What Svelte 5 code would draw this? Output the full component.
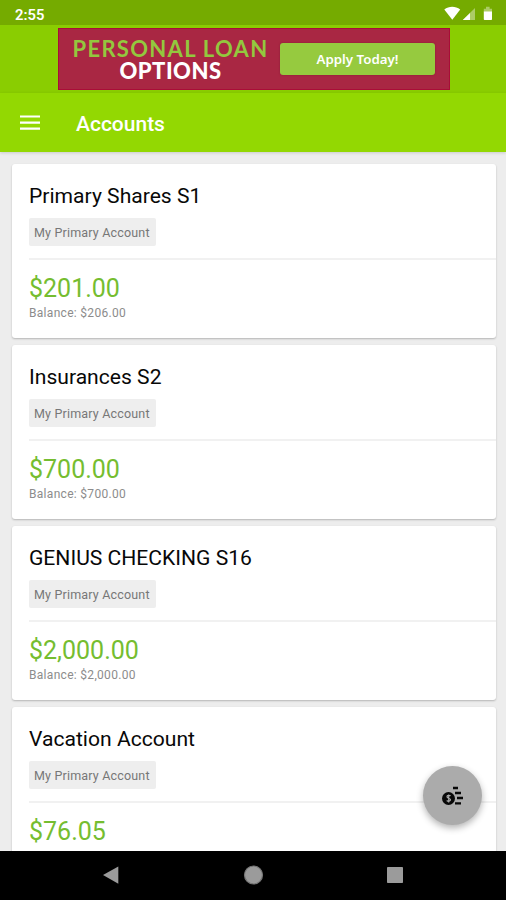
<script lang="ts">
	type Account = {
		name: string;
		tag: string;
		available: string;
		balance?: string;
	};

	const accounts: Account[] = [
		{ name: 'Primary Shares S1', tag: 'My Primary Account', available: '$201.00', balance: '$206.00' },
		{ name: 'Insurances S2', tag: 'My Primary Account', available: '$700.00', balance: '$700.00' },
		{ name: 'GENIUS CHECKING S16', tag: 'My Primary Account', available: '$2,000.00', balance: '$2,000.00' },
		{ name: 'Vacation Account', tag: 'My Primary Account', available: '$76.05' }
	];
</script>

<div class="screen">
	<div class="status-bar">
		<span class="time">2:55</span>
		<svg class="status-icons" width="50" height="16" viewBox="0 0 50 16" aria-hidden="true">
			<path d="M0.3 3.4C4.8-0.2 11.6-0.2 16.2 3.4L8.3 13.8Z" fill="#fff" />
			<path d="M18.8 14L31 2V14Z" fill="#fff" opacity="0.4" />
			<path d="M18.8 14L26 7V14Z" fill="#fff" />
			<path d="M42 0.8h3.6v2H48V6h-8.2V2.8H42Z" fill="#fff" opacity="0.4" />
			<path d="M39.8 5.5H48V13.2q0 0.8-0.8 0.8h-6.6q-0.8 0-0.8-0.8Z" fill="#fff" />
		</svg>
	</div>

	<div class="promo">
		<div class="banner">
			<div class="headline">
				<span class="line-one">PERSONAL LOAN</span>
				<span class="line-two">OPTIONS</span>
			</div>
			<button class="apply">Apply Today!</button>
		</div>
	</div>

	<header class="toolbar">
		<button class="menu" aria-label="Menu">
			<svg width="20" height="15" viewBox="0 0 20 15">
				<path d="M0 1.5h20M0 7.6h20M0 13.6h20" stroke="#fff" stroke-width="2.2" />
			</svg>
		</button>
		<h1>Accounts</h1>
	</header>

	<main class="accounts">
		{#each accounts as account}
			<section class="card">
				<div class="top">
					<h2>{account.name}</h2>
					<span class="tag">{account.tag}</span>
				</div>
				<div class="amounts">
					<p class="available">{account.available}</p>
					{#if account.balance}
						<p class="balance">Balance: {account.balance}</p>
					{/if}
				</div>
			</section>
		{/each}
	</main>

	<button class="fab" aria-label="Quick pay">
		<svg width="22" height="20" viewBox="0 0 22 20">
			<circle cx="6.5" cy="12.5" r="6.5" fill="#080808" />
			<path
				d="M8.6 9.9C7.5 9 5 9.1 5 10.7c0 1.8 3.5 1.3 3.5 3.1 0 1.6-2.5 1.8-3.8 0.7M6.7 8.4v8.2"
				fill="none"
				stroke="#aaa"
				stroke-width="1.2"
			/>
			<path d="M11 2h5M13 7h6M15 12h6M13 17.3h6" stroke="#080808" stroke-width="2.3" />
		</svg>
	</button>

	<nav class="nav-bar">
		<svg width="506" height="49" viewBox="0 0 506 49">
			<path d="M103 24L118.3 15.5V32.8Z" fill="#9b9b9b" />
			<circle cx="253.5" cy="24" r="9" fill="#9b9b9b" stroke="#777" stroke-width="1.2" />
			<rect x="387" y="16" width="16" height="16" rx="0.8" fill="#9b9b9b" />
		</svg>
	</nav>
</div>

<style>
	:global(body) {
		margin: 0;
	}

	.screen {
		position: relative;
		display: flex;
		flex-direction: column;
		width: 506px;
		height: 900px;
		overflow: hidden;
		background: #ededed;
		font-family: Roboto, sans-serif;
	}

	button {
		border: 0;
		padding: 0;
		font-family: inherit;
	}

	h1,
	h2,
	p {
		margin: 0;
	}

	.status-bar {
		flex: none;
		display: flex;
		align-items: center;
		justify-content: space-between;
		box-sizing: border-box;
		height: 25px;
		padding: 2px 12px 0 15px;
		background: #75ab00;
	}

	.time {
		color: #fff;
		font-size: 14.8px;
		font-weight: 600;
		line-height: 20px;
		padding-top: 2px;
	}

	.status-icons {
		margin-top: 1px;
	}

	.promo {
		flex: none;
		display: flex;
		justify-content: center;
		box-sizing: border-box;
		height: 68px;
		padding: 3px 0 0 2px;
		background: #8acd01;
	}

	.banner {
		display: flex;
		box-sizing: border-box;
		width: 392px;
		height: 62px;
		border: 1px solid #a90d37;
		background: #a92743;
	}

	.headline {
		display: flex;
		flex-direction: column;
		align-items: center;
		width: 221px;
		padding-left: 1px;
		padding-top: 9px;
		font-family: Lato, sans-serif;
		font-size: 22px;
		font-weight: 700;
		line-height: 22px;
		white-space: nowrap;
	}

	.line-one {
		color: #93c83e;
		letter-spacing: 1.3px;
	}

	.line-two {
		color: #fff;
		font-weight: 900;
		letter-spacing: 0.5px;
	}

	.apply {
		width: 155px;
		height: 32px;
		margin-top: 14px;
		margin-left: -1px;
		border-radius: 3px;
		background: #96ca3f;
		box-shadow: 0 0 2px #851d38;
		color: #fff;
		font-family: 'Noto Sans', sans-serif;
		font-size: 13.3px;
		font-weight: 600;
	}

	.toolbar {
		flex: none;
		z-index: 1;
		display: flex;
		align-items: center;
		height: 59px;
		padding-left: 20px;
		background: #93d802;
		box-shadow: 0 1px 3px rgba(0, 0, 0, 0.15);
	}

	.menu {
		display: flex;
		width: 56px;
		background: none;
	}

	h1 {
		color: #fff;
		font-size: 21px;
		font-weight: 500;
		line-height: 28px;
		padding-top: 3px;
	}

	.accounts {
		flex: 1;
		min-height: 0;
		overflow: hidden;
		display: flex;
		flex-direction: column;
		gap: 7px;
		padding: 12px 10px 0 12px;
	}

	.card {
		flex: none;
		box-sizing: border-box;
		height: 174px;
		padding-left: 17px;
		border-radius: 3px;
		background: #fff;
		box-shadow: 0 1px 2px rgba(0, 0, 0, 0.24);
	}

	.top {
		box-sizing: border-box;
		height: 96px;
		padding-top: 18px;
		border-bottom: 2px solid #f1f1f1;
	}

	h2 {
		color: #080808;
		font-size: 21.1px;
		font-weight: 400;
		line-height: 28px;
	}

	.tag {
		display: block;
		box-sizing: border-box;
		width: 127px;
		height: 28px;
		margin-top: 8px;
		padding-left: 5px;
		border-radius: 2px;
		background: #eee;
		color: #777;
		font-size: 12.5px;
		line-height: 29px;
		letter-spacing: 0.18px;
		white-space: nowrap;
	}

	.available {
		padding-top: 14px;
		color: #75bd30;
		font-size: 25px;
		line-height: 30px;
	}

	.balance {
		margin-top: -1px;
		color: #8c8c8c;
		font-size: 12px;
		line-height: 20px;
		letter-spacing: 0.3px;
	}

	.fab {
		position: absolute;
		right: 24px;
		bottom: 75px;
		z-index: 2;
		display: flex;
		align-items: center;
		justify-content: center;
		width: 59px;
		height: 59px;
		border-radius: 50%;
		background: #ababab;
		box-shadow: 0 3px 7px rgba(0, 0, 0, 0.3);
	}

	.nav-bar {
		flex: none;
		z-index: 1;
		height: 49px;
		background: #000;
	}
</style>
